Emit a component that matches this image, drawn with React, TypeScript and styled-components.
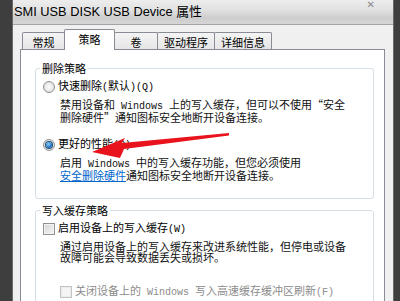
import React from 'react';
import styled, { createGlobalStyle } from 'styled-components';

const Global = createGlobalStyle`
  html, body { margin: 0; padding: 0; background: #3b3b3b; }
  body { width: 400px; height: 301px; overflow: hidden; font-family: "Noto Sans CJK SC", sans-serif; }
  * { box-sizing: border-box; }
`;

const Screen = styled.div`
  position: relative;
  display: flex;
  width: 400px;
  height: 301px;
  overflow: hidden;
  background: #3b3b3b;
`;

const DarkEdge = styled.div<{ $w: number; $side: 'l' | 'r' }>`
  flex: none;
  width: ${(p) => p.$w}px;
  background: #3e3e3e;
  border-${(p) => (p.$side === 'l' ? 'right' : 'left')}: 1px solid #6a6a6a;
`;

const Window = styled.div`
  flex: none;
  width: 380px;
  display: flex;
  flex-direction: column;
  background: #f0f0f0;
`;

const TitleBar = styled.div`
  flex: none;
  height: 25px;
  display: flex;
  justify-content: space-between;
  align-items: flex-start;
  padding: 0 18px 0 1px;
  background: linear-gradient(#ededed 0%, #e2e2e2 40%, #cdcdcd 75%, #d6d6d6 100%);
  border-bottom: 1px solid #a4a4a4;
`;

const Title = styled.span`
  margin-top: 5px;
  font-family: "Liberation Sans", "Noto Sans CJK SC", sans-serif;
  font-size: 12.8px;
  line-height: 14px;
  color: #000;
`;

const Close = styled.span`
  margin-top: 0px;
  font-family: "DejaVu Sans", sans-serif;
  font-size: 10px;
  line-height: 10px;
  color: #8a8a8a;
`;

const Body = styled.div`
  flex: 1;
  display: flex;
  flex-direction: column;
  padding: 4px 8px 0 7px;
`;

const TabRow = styled.div`
  flex: none;
  display: flex;
  align-items: flex-end;
  height: 20px;
  padding-left: 2px;
`;

const Tab = styled.div<{ $w: number; $active?: boolean }>`
  position: relative;
  z-index: ${(p) => (p.$active ? 1 : 0)};
  width: ${(p) => p.$w}px;
  height: ${(p) => (p.$active ? 21 : 17)}px;
  margin-bottom: ${(p) => (p.$active ? -1 : 0)}px;
  & + & { margin-left: -1px; }
  padding-top: 2px;
  border: 1px solid #898c95;
  border-bottom: none;
  border-radius: 2px 2px 0 0;
  background: ${(p) => (p.$active ? '#fff' : 'linear-gradient(#f4f4f4, #e6e6e6)')};
  font-size: 11px;
  line-height: 14px;
  text-align: center;
  color: #000;
`;

const Panel = styled.div`
  flex: 1;
  display: flex;
  flex-direction: column;
  background: #fff;
  border: 1px solid #898c95;
  border-bottom: none;
  padding: 12px 10px 0 14px;
`;

const Group = styled.fieldset<{ $gap?: number }>`
  margin: ${(p) => p.$gap ?? 0}px 0 0 0;
  min-width: 0;
  border: 1px solid #d5dfe5;
  border-radius: 3px;
  padding: 6px 7px 17px 7px;
`;

const Legend = styled.legend`
  margin-left: -3px;
  padding: 0 2px;
  font-size: 11px;
  line-height: 12px;
  color: #000;
`;

const Option = styled.div<{ $gap?: number; $indent?: number; $disabled?: boolean }>`
  display: flex;
  align-items: center;
  gap: 3px;
  height: 13px;
  margin-top: ${(p) => p.$gap ?? 0}px;
  margin-left: ${(p) => p.$indent ?? 0}px;
  font-size: 11px;
  line-height: 13px;
  white-space: nowrap;
  color: ${(p) => (p.$disabled ? '#8c8c8c' : '#000')};
`;

const Radio = styled.span<{ $checked?: boolean }>`
  flex: none;
  width: 12px;
  height: 12px;
  border-radius: 50%;
  border: 1px solid #8f9193;
  background: radial-gradient(circle at 50% 50%, #fdfdfd 0%, #e6e6e6 60%, #cfcfcf 100%);
  display: flex;
  align-items: center;
  justify-content: center;
  &::after {
    content: '';
    display: ${(p) => (p.$checked ? 'block' : 'none')};
    width: 6px;
    height: 6px;
    border-radius: 50%;
    background: radial-gradient(circle at 40% 35%, #8fd0f6 0%, #2a7cc8 55%, #0d3f7a 100%);
    box-shadow: 0 0 0 1px #1c4f7c;
  }
`;

const Check = styled.span<{ $disabled?: boolean }>`
  flex: none;
  width: 12px;
  height: 12px;
  border: 1px solid ${(p) => (p.$disabled ? '#c3c3c3' : '#8f9193')};
  background: ${(p) =>
    p.$disabled ? '#f4f4f4' : 'linear-gradient(135deg, #d4d4d4, #f6f6f6)'};
  box-shadow: inset 0 0 0 1px ${(p) => (p.$disabled ? '#ececec' : '#f4f4f4')};
`;

const Desc = styled.div<{ $gap?: number }>`
  margin: ${(p) => p.$gap ?? 6}px 0 0 17px;
  font-size: 11px;
  line-height: 11px;
  color: #111;
  white-space: nowrap;
`;

const DimDesc = styled(Desc)`
  color: #8c8c8c;
`;

const L = styled.span`
  font-family: "Liberation Mono", monospace;
  font-size: 10px;
`;

const Link = styled.span`
  color: #0066cc;
  text-decoration: underline;
`;

const Overlay = styled.svg`
  position: absolute;
  left: 0;
  top: 0;
  pointer-events: none;
`;

export default function App() {
  return (
    <>
      <Global />
      <Screen>
        <DarkEdge $w={13} $side="l" />
        <Window>
          <TitleBar>
            <Title>SMI USB DISK USB Device 属性</Title>
            <Close>✕</Close>
          </TitleBar>
          <Body>
            <TabRow>
              <Tab $w={43}>常规</Tab>
              <Tab $w={51} $active>策略</Tab>
              <Tab $w={44}>卷</Tab>
              <Tab $w={58}>驱动程序</Tab>
              <Tab $w={58}>详细信息</Tab>
            </TabRow>
            <Panel>
              <Group>
                <Legend>删除策略</Legend>
                <Option>
                  <Radio />
                  <span>快速删除<L>(</L>默认<L>)(Q)</L></span>
                </Option>
                <Desc>
                  禁用设备和<L> Windows </L>上的写入缓存，但可以不使用“安全
                  <br />
                  删除硬件”通知图标安全地断开设备连接。
                </Desc>
                <Option $gap={15}>
                  <Radio $checked />
                  <span>更好的性能<L>(P)</L></span>
                </Option>
                <Desc>
                  启用<L> Windows </L>中的写入缓存功能，但您必须使用
                  <br />
                  <Link>安全删除硬件</Link>通知图标安全地断开设备连接。
                </Desc>
              </Group>
              <Group $gap={5}>
                <Legend>写入缓存策略</Legend>
                <Option>
                  <Check />
                  <span>启用设备上的写入缓存<L>(W)</L></span>
                </Option>
                <Desc>
                  通过启用设备上的写入缓存来改进系统性能，但停电或设备
                  <br />
                  故障可能会导致数据丢失或损坏。
                </Desc>
                <Option $gap={22} $indent={17} $disabled>
                  <Check $disabled />
                  <span>关闭设备上的<L> Windows </L>写入高速缓存缓冲区刷新<L>(F)</L></span>
                </Option>
                <DimDesc $gap={4}>
                  为防止数据丢失，请不要选中此复选框，除非设备有单独的电源
                </DimDesc>
              </Group>
            </Panel>
          </Body>
        </Window>
        <DarkEdge $w={7} $side="r" />
        <Overlay width={400} height={301} viewBox="0 0 400 301">
          <polygon
            points="92,152 125,138 122,143 229,133 229,135.5 124,149 120,158"
            fill="#e8131c"
          />
        </Overlay>
      </Screen>
    </>
  );
}
